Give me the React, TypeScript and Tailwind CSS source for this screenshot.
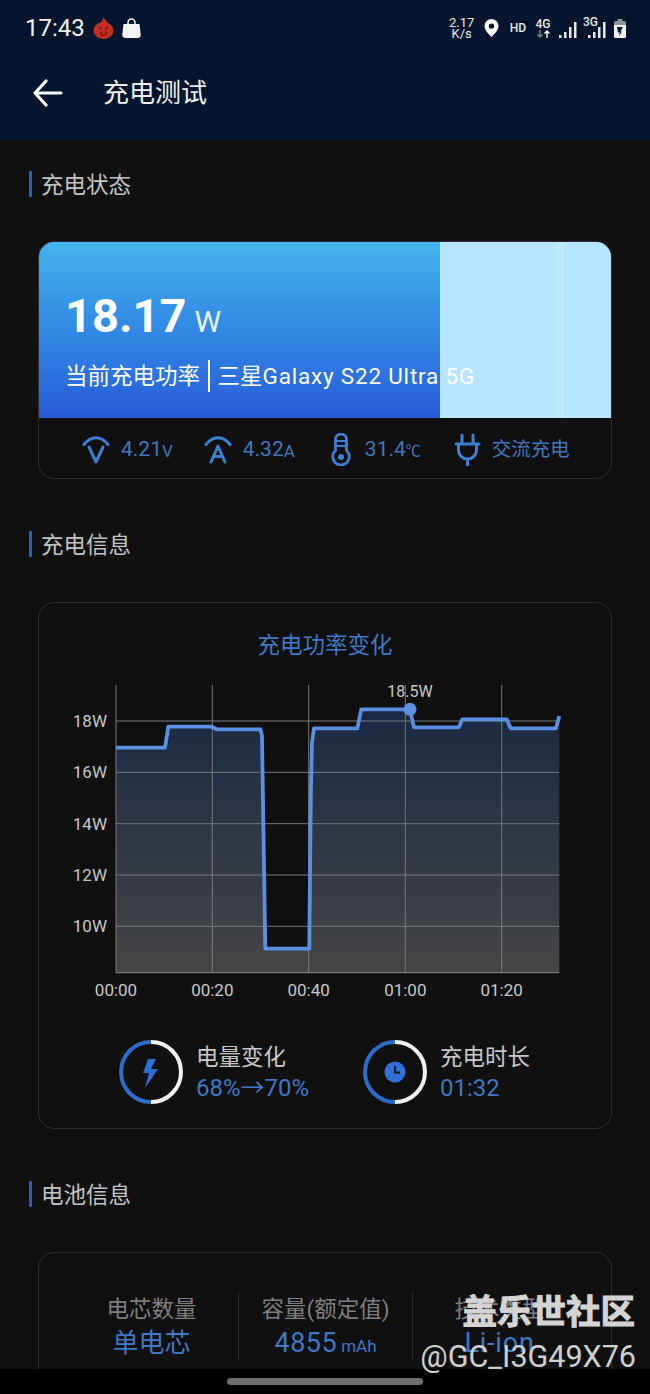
const CJK = "font-['Roboto','Noto_Sans_CJK_SC',sans-serif]";

const linePoints =
  "56,77.7 105,77.7 108.3,56.7 151.7,56.7 156.7,59.3 200.5,59.3 202,66 202.5,100 205.3,278.7 249.3,278.7 250.8,125 252,72 254,58.3 297.3,58.3 301.3,39.3 350,39.3 354,57.3 399,57.3 402.3,49.3 446.7,49.3 450.7,58.3 496,58.3 499.3,46";

function StatusBar() {
  return (
    <div className="flex h-[56px] items-center pl-[25px] pr-[24px] text-white">
      <span className="text-[24px] leading-none text-[#f2f2f2]">17:43</span>
      <svg className="ml-[8px]" width="21" height="22" viewBox="0 0 21 22">
        <path d="M10.500 0c.5 2 1.500 3 2.500 3 0 1.500 1 2.200 2 3 3 1.500 5.500 4 5.500 7.500a10 8.500 0 0 1-20 0C.5 10 3 7.500 6 6c1 .3 1.500 0 2-1 1-1 2-3 2.500-5z" fill="#c4301f" />
        <path d="M6 10l3 2.500M15 10l-3 2.500M7 18h7" stroke="#7c1712" strokeWidth="1.600" fill="none" />
        <circle cx="8" cy="15.500" r="1.200" fill="#7c1712" />
        <circle cx="13" cy="15.500" r="1.200" fill="#7c1712" />
      </svg>
      <svg className="ml-[8px]" width="19" height="20" viewBox="0 0 19 20">
        <path d="M1.500 6h16l1.200 10.500a3 3 0 0 1-3 3.500H3.300a3 3 0 0 1-3-3.500z" fill="#f4f4f4" />
        <path d="M6 7V4.500a3.500 3.500 0 0 1 7 0V7" stroke="#f4f4f4" strokeWidth="1.500" fill="none" />
      </svg>

      <div className="ml-auto flex items-center">
        <div className="flex w-[28px] flex-col items-center text-[13px] leading-[11px] text-[#e8e8e8]">
          <span>2.17</span>
          <span>K/s</span>
        </div>
        <svg className="ml-[8px]" width="15" height="18" viewBox="0 0 15 18">
          <path fillRule="evenodd" d="M7.500 0a7 7 0 0 1 7 7c0 4-4 8-7 11-3-3-7-7-7-11a7 7 0 0 1 7-7zm0 4.400a2.700 2.700 0 1 0 0 5.400 2.700 2.700 0 0 0 0-5.400z" fill="#fff" />
        </svg>
        <span className="ml-[11px] text-[12px] font-medium text-[#e8e8e8]">HD</span>
        <div className="ml-[9px] flex w-[16px] flex-col items-center">
          <span className="text-[12px] font-medium leading-[11px] text-[#e8e8e8]">4G</span>
          <svg width="15" height="8" viewBox="0 0 15 8">
            <path d="M4 0v7M1.500 4.500 4 7l2.500-2.500" stroke="#7d8896" strokeWidth="1.400" fill="none" />
            <path d="M11 8V1M8.500 3.500 11 1l2.500 2.500" stroke="#fff" strokeWidth="1.400" fill="none" />
          </svg>
        </div>
        <svg className="ml-[8px] mt-[4px]" width="18" height="16" viewBox="0 0 18 16">
          <path d="M0 13h2.500v3H0zM5 10h2.500v6H5zM10 5h2.500v11H10zM15 0h2.500v16H15z" fill="#e8e8e8" />
        </svg>
        <div className="relative ml-[11px] mt-[4px]">
          <span className="absolute -left-[5px] -top-[5px] text-[12px] font-medium leading-[11px] text-[#e8e8e8]">3G</span>
          <svg width="18" height="16" viewBox="0 0 18 16">
            <path d="M0 13h2.500v3H0zM5 10h2.500v6H5zM10 5h2.500v11H10zM15 0h2.500v16H15z" fill="#e8e8e8" />
          </svg>
        </div>
        <svg className="ml-[8px]" width="12" height="19" viewBox="0 0 12 19">
          <path d="M3.500 0h5v2h-5z" fill="#8b929c" />
          <path d="M1.500 2h9A1.500 1.500 0 0 1 12 3.500V6H0V3.500A1.500 1.500 0 0 1 1.500 2z" fill="#8b929c" />
          <path d="M0 6h12v11.500A1.500 1.500 0 0 1 10.500 19h-9A1.500 1.500 0 0 1 0 17.500z" fill="#f2f2f2" />
          <path d="M3 8h6L6.500 12.500H8L5 17l.8-3.500H4z" fill="#0a1a30" />
        </svg>
      </div>
    </div>
  );
}

function SectionTitle({ title }: { title: string }) {
  return (
    <div className="flex h-[26px] items-center pl-[29px]">
      <div className="h-[26px] w-[3px] rounded-[1px] bg-[#2c5fb0]" />
      <span className="ml-[9px] mt-[2px] text-[22.5px] leading-none text-[#c4c4c4]">{title}</span>
    </div>
  );
}

function Unit({ value, unit }: { value: string; unit: string }) {
  return (
    <>
      <span className="text-[21px] leading-none">{value}</span>
      <span className="mt-[3px] text-[17px] leading-none">{unit}</span>
    </>
  );
}

function VoltIcon() {
  return (
    <svg width="28" height="29" viewBox="0 0 28 29" fill="none" stroke="#3f7fd0" strokeWidth="3" strokeLinecap="round" strokeLinejoin="round">
      <path d="M2 9.500C9 .5 19 .5 26 9.500" />
      <path d="M7 12l7 15 7-15" />
    </svg>
  );
}

function AmpIcon() {
  return (
    <svg width="28" height="29" viewBox="0 0 28 29" fill="none" stroke="#3f7fd0" strokeWidth="3" strokeLinecap="round" strokeLinejoin="round">
      <path d="M2 9.500C9 .5 19 .5 26 9.500" />
      <path d="M7 27l7-16 7 16M9.500 21.500h9" />
    </svg>
  );
}

function ThermoIcon() {
  return (
    <svg width="20" height="33" viewBox="0 0 20 33" fill="none" stroke="#3f7fd0" strokeWidth="2.800" strokeLinecap="round">
      <path d="M4.500 17.500V6.500a5.500 5.500 0 0 1 11 0v11a8.300 8.300 0 1 1-11 0z" />
      <path d="M5 8h10M5 13h10" strokeWidth="2.200" />
      <circle cx="10" cy="24" r="3" fill="#3f7fd0" stroke="none" />
    </svg>
  );
}

function PlugIcon() {
  return (
    <svg width="27" height="33" viewBox="0 0 27 33" fill="none" stroke="#3f7fd0" strokeWidth="3" strokeLinecap="round" strokeLinejoin="round">
      <path d="M8 2v9M19 2v9M2 11h23" />
      <path d="M4.500 11v6a9 9 0 0 0 18 0v-6" />
      <path d="M13.500 26v6" />
    </svg>
  );
}

function PowerCard() {
  return (
    <div className="mx-[38px] mt-[44px] h-[238px] overflow-hidden rounded-[16px] border border-[#2b2d30]">
      <div className="relative h-[176px] bg-gradient-to-b from-[#43b4ec] to-[#2a5bd9]">
        <div className="absolute inset-y-0 right-0 w-[171px] bg-[#b7e5fd]" />
        <div className="absolute inset-y-0 right-[47px] w-[10px] bg-gradient-to-r from-[#b7e5fd] to-[#c6ebfd]" />
        <div className="relative pl-[26px] pt-[44px] text-white">
          <div className="flex items-baseline">
            <span className="text-[47px] font-bold leading-[60px]">18.17</span>
            <span className="ml-[8px] text-[30px] leading-none text-[#e8f3fd]">W</span>
          </div>
          <div className="mt-[14px] flex h-[32px] items-center text-[22.5px] leading-none">
            <span>当前充电功率</span>
            <div className="mx-[8px] h-[32px] w-[1.500px] bg-white" />
            <span>
              三星<span className="tracking-[0.8px]">Galaxy S22 Ultra 5G</span>
            </span>
          </div>
        </div>
      </div>
      <div className="flex h-[60px] items-center pl-[43px] pt-[3px] text-[#4378bd]">
        <VoltIcon />
        <div className="ml-[11px] flex items-center">
          <Unit value="4.21" unit="V" />
        </div>
        <div className="ml-[31px]">
          <AmpIcon />
        </div>
        <div className="ml-[11px] flex items-center">
          <Unit value="4.32" unit="A" />
        </div>
        <div className="ml-[36px]">
          <ThermoIcon />
        </div>
        <div className="ml-[14px] flex items-center">
          <span className="text-[21px] leading-none">31.4</span>
          <span className="mt-[3px] text-[15px] leading-none">℃</span>
        </div>
        <div className="ml-[33px]">
          <PlugIcon />
        </div>
        <span className="ml-[11px] text-[19.5px] leading-none">交流充电</span>
      </div>
    </div>
  );
}

function PowerChart() {
  const yLines = [
    { y: 51, label: "18W" },
    { y: 102.3, label: "16W" },
    { y: 153.7, label: "14W" },
    { y: 205, label: "12W" },
    { y: 256.3, label: "10W" },
  ];
  const xLines = [
    { x: 56, label: "00:00" },
    { x: 152.3, label: "00:20" },
    { x: 248.7, label: "00:40" },
    { x: 345.3, label: "01:00" },
    { x: 441.7, label: "01:20" },
  ];
  return (
    <svg width="520" height="340" viewBox="0 0 520 340" fontFamily="Roboto, sans-serif" fontSize="17">
      <defs>
        <linearGradient id="area" x1="0" y1="0" x2="0" y2="1">
          <stop offset="0" stopColor="#1a2a44" />
          <stop offset="1" stopColor="#454545" />
        </linearGradient>
      </defs>
      <polygon points={`56,302.7 ${linePoints} 499.3,302.7`} fill="url(#area)" />
      {yLines.map((l) => (
        <g key={l.label}>
          <line x1="56" x2="499.3" y1={l.y} y2={l.y} stroke="#777a7e" strokeWidth="1" />
          <text x="47" y={l.y + 6} textAnchor="end" fill="#c8c8c8">
            {l.label}
          </text>
        </g>
      ))}
      {xLines.map((l) => (
        <g key={l.label}>
          <line x1={l.x} x2={l.x} y1="15" y2="302.7" stroke="#777a7e" strokeWidth="1" />
          <text x={l.x} y="326" textAnchor="middle" fill="#c8c8c8">
            {l.label}
          </text>
        </g>
      ))}
      <line x1="56" x2="499.3" y1="302.7" y2="302.7" stroke="#8a8a8a" strokeWidth="1" />
      <polyline points={linePoints} fill="none" stroke="#5b8fe0" strokeWidth="3.800" strokeLinejoin="round" />
      <circle cx="350" cy="39.3" r="6.500" fill="#5b8fe0" />
      <text x="350" y="27" textAnchor="middle" fill="#c8c8c8" fontSize="16">
        18.5W
      </text>
    </svg>
  );
}

function Ring({ children }: { children: React.ReactNode }) {
  return (
    <svg width="64" height="64" viewBox="0 0 64 64" fill="none">
      <path d="M32 2a30 30 0 0 1 0 60" stroke="#f2f2f2" strokeWidth="4" />
      <path d="M32 62a30 30 0 0 1 0-60" stroke="#2f6bc9" strokeWidth="4" />
      {children}
    </svg>
  );
}

function Stat({ ring, label, value }: { ring: React.ReactNode; label: string; value: string }) {
  return (
    <div className="flex items-center">
      <Ring>{ring}</Ring>
      <div className="ml-[13px] flex flex-col">
        <span className="text-[22.5px] leading-[32px] text-[#c8c8c8]">{label}</span>
        <span className="text-[24px] leading-[30px] text-[#3f78c4]">{value}</span>
      </div>
    </div>
  );
}

function ChartCard() {
  return (
    <div className="mx-[38px] mt-[45px] h-[527px] rounded-[16px] border border-[#2b2d30]">
      <div className="pt-[27px] text-center text-[22.5px] leading-[30px] text-[#3f78c4]">充电功率变化</div>
      <div className="ml-[21px] mt-[10px]">
        <PowerChart />
      </div>
      <div className="mt-[30px] flex pl-[80px]">
        <div className="w-[244px]">
          <Stat
            label="电量变化"
            value="68%→70%"
            ring={<path d="M37 19H29l-5 14h6l-4 15 13-19h-7l5-10z" fill="#2f6fd6" />}
          />
        </div>
        <Stat
          label="充电时长"
          value="01:32"
          ring={
            <>
              <circle cx="32" cy="32" r="10.500" fill="#2f6fd6" />
              <path d="M32 26v6.500h5" stroke="#101418" strokeWidth="1.800" />
            </>
          }
        />
      </div>
    </div>
  );
}

function InfoCol({ label, children }: { label: string; children: React.ReactNode }) {
  return (
    <div className="flex w-[173px] flex-col items-center">
      <span className="text-[22.5px] leading-[30px] text-[#7f7f7f]">{label}</span>
      <div className="mt-[1px] flex h-[36px] items-baseline text-[#3f78c4]">{children}</div>
    </div>
  );
}

function BatteryCard() {
  return (
    <div className="mx-[38px] mt-[45px] h-[160px] rounded-t-[16px] border border-[#2b2d30] pl-[26px] pt-[41px]">
      <div className="flex items-start">
        <InfoCol label="电芯数量">
          <span className="text-[26px] leading-[36px]">单电芯</span>
        </InfoCol>
        <div className="-mt-[2px] h-[68px] w-px bg-[#2b2d30]" />
        <InfoCol label="容量(额定值)">
          <span className="text-[27px] leading-[36px] tracking-[0.5px]">4855</span>
          <span className="ml-[4px] text-[17px] leading-none">mAh</span>
        </InfoCol>
        <div className="-mt-[2px] h-[68px] w-px bg-[#2b2d30]" />
        <InfoCol label="技术类型">
          <span className="text-[27px] leading-[36px] tracking-[0.8px]">Li-ion</span>
        </InfoCol>
      </div>
    </div>
  );
}

export default function App() {
  return (
    <div className={`relative h-[1394px] w-[650px] overflow-hidden bg-[#101011] ${CJK}`}>
      <header className="h-[140px] bg-[#06152e]">
        <StatusBar />
        <div className="flex h-[74px] items-center pl-[33px]">
          <svg width="30" height="28" viewBox="0 0 30 28" fill="none" stroke="#fff" strokeWidth="3.200" strokeLinecap="round" strokeLinejoin="round">
            <path d="M28 14H3M13 2 2 14l11 12" />
          </svg>
          <span className="ml-[40px] text-[26px] leading-none text-[#f0f0f0]">充电测试</span>
        </div>
      </header>

      <div className="pt-[31px]">
        <SectionTitle title="充电状态" />
        <PowerCard />
      </div>
      <div className="pt-[52px]">
        <SectionTitle title="充电信息" />
        <ChartCard />
      </div>
      <div className="pt-[52px]">
        <SectionTitle title="电池信息" />
        <BatteryCard />
      </div>

      <div className="absolute inset-x-0 bottom-0 flex h-[25px] items-start justify-center bg-black pt-[9px]">
        <div className="h-[7px] w-[196px] rounded-full bg-[#6e6e6e]" />
      </div>

      <div className="absolute bottom-[65px] right-[15px] text-[34.5px] font-bold leading-none text-[#d4d4d4] [-webkit-text-stroke:1px_#d4d4d4]">
        盖乐世社区
      </div>
      <div className="absolute bottom-[22px] right-[14px] text-[30.5px] leading-none text-[#cfcfcf]">
        @GC_I3G49X76
      </div>
    </div>
  );
}
